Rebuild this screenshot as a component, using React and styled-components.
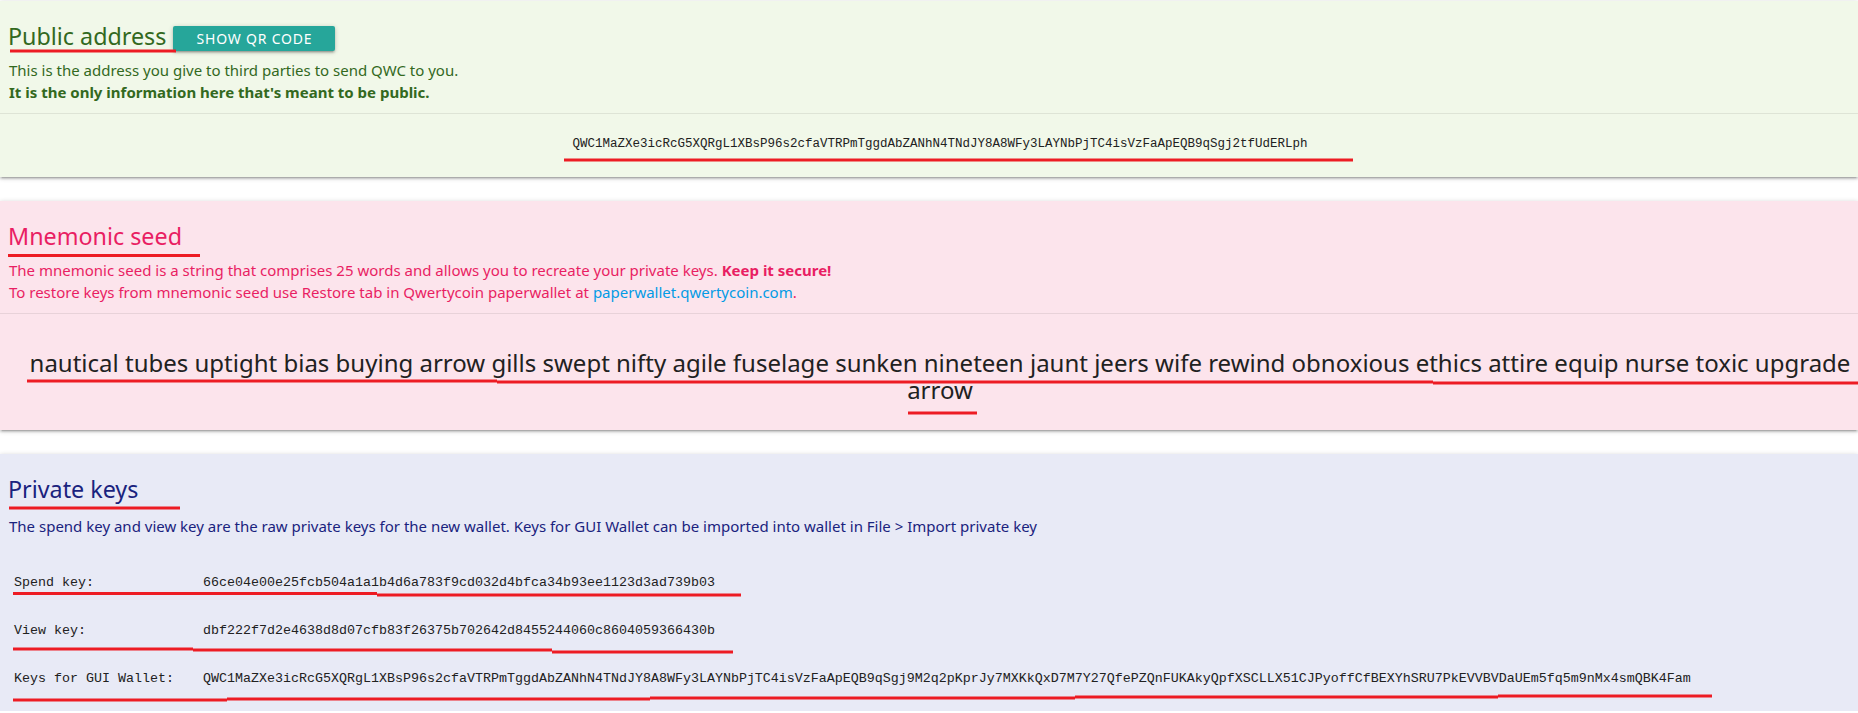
import styled, { createGlobalStyle } from "styled-components";

const COLORS = {
  GREEN_BG: "#f1f8e9",
  GREEN_TEXT: "#33691e",
  PINK_BG: "#fce4ec",
  PINK_TEXT: "#e91e63",
  INDIGO_BG: "#e8eaf6",
  INDIGO_TEXT: "#1a237e",
  TEAL: "#26a69a",
  LINK: "#039be5",
  DARK: "#212121",
  MARK: "#ed1c24",
};

const ADDRESS =
  "QWC1MaZXe3icRcG5XQRgL1XBsP96s2cfaVTRPmTggdAbZANhN4TNdJY8A8WFy3LAYNbPjTC4isVzFaApEQB9qSgj2tfUdERLph";

const MNEMONIC =
  "nautical tubes uptight bias buying arrow gills swept nifty agile fuselage sunken nineteen jaunt jeers wife rewind obnoxious ethics attire equip nurse toxic upgrade arrow";

const KEYS = [
  { label: "Spend key:", value: "66ce04e00e25fcb504a1a1b4d6a783f9cd032d4bfca34b93ee1123d3ad739b03" },
  { label: "View key:", value: "dbf222f7d2e4638d8d07cfb83f26375b702642d8455244060c8604059366430b" },
  {
    label: "Keys for GUI Wallet:",
    value:
      "QWC1MaZXe3icRcG5XQRgL1XBsP96s2cfaVTRPmTggdAbZANhN4TNdJY8A8WFy3LAYNbPjTC4isVzFaApEQB9qSgj9M2q2pKprJy7MXKkQxD7M7Y27QfePZQnFUKAkyQpfXSCLLX51CJPyoffCfBEXYhSRU7PkEVVBVDaUEm5fq5m9nMx4smQBK4Fam",
  },
];

// red hand-drawn annotation strokes lying over the page
const MARKS = [
  [10, 51, 176, 51],
  [564, 160, 1353, 160],
  [8, 255.5, 200, 255.5],
  [27, 381, 497, 381],
  [497, 382, 1433, 382],
  [1433, 383, 1858, 383],
  [908, 413, 977, 413],
  [9, 508, 180, 508],
  [13, 593.5, 377, 593.5],
  [377, 595, 741, 595],
  [13, 649, 193, 649],
  [193, 650, 552, 650],
  [552, 652, 733, 652],
  [13, 700, 227, 700],
  [227, 699, 650, 699],
  [650, 698, 1075, 698],
  [1075, 697, 1498, 697],
  [1498, 696, 1712, 696],
];

const GlobalStyle = createGlobalStyle`
  html, body {
    margin: 0;
    padding: 0;
    background: #fff;
  }
  body {
    font-family: "Noto Sans", "Noto Sans CJK KR", sans-serif;
    font-size: 15px;
  }
`;

const Page = styled.div`
  position: relative;
  width: 1858px;
  padding-top: 1px;
  display: flex;
  flex-direction: column;
  gap: 24px;
`;

const Panel = styled.section`
  background: ${(p) => p.$bg};
  color: ${(p) => p.$fg};
  padding-top: 20px;
  box-shadow: 0 2px 2px 0 rgba(0, 0, 0, 0.14), 0 3px 1px -2px rgba(0, 0, 0, 0.12),
    0 1px 5px 0 rgba(0, 0, 0, 0.2);
`;

const Header = styled.div`
  display: flex;
  align-items: flex-end;
  padding-left: 8px;
`;

const Title = styled.h2`
  margin: 0;
  font-size: 23.3px;
  line-height: 30px;
  font-weight: 400;
`;

const QrButton = styled.button`
  display: inline-flex;
  align-items: center;
  justify-content: center;
  width: 162px;
  height: 25px;
  margin-left: 7px;
  padding: 0;
  border: none;
  border-radius: 2px;
  background: ${COLORS.TEAL};
  color: #fff;
  font-family: "Noto Sans", sans-serif;
  font-size: 14px;
  letter-spacing: 0.8px;
  text-transform: uppercase;
  box-shadow: 0 2px 2px 0 rgba(0, 0, 0, 0.14), 0 3px 1px -2px rgba(0, 0, 0, 0.12),
    0 1px 5px 0 rgba(0, 0, 0, 0.2);
  cursor: pointer;
`;

const Desc = styled.div`
  margin-top: ${(p) => p.$top || 8}px;
  padding: 0 9px;
  font-size: 15px;
  line-height: 22px;
`;

const Divider = styled.hr`
  margin: 10px 0 0;
  border: none;
  border-top: 1px solid rgba(0, 0, 0, 0.08);
`;

const Address = styled.div`
  padding: 20px 0 23px 22px;
  text-align: center;
  font-family: "Liberation Mono", "DejaVu Sans Mono", monospace;
  font-size: 12.5px;
  line-height: 20px;
  color: ${COLORS.DARK};
`;

const Mnemonic = styled.div`
  padding: 35px 0 27px 22px;
  text-align: center;
  font-size: 24px;
  line-height: 27px;
  color: ${COLORS.DARK};
`;

const Link = styled.a`
  color: ${COLORS.LINK};
  text-decoration: none;
`;

const KeyGrid = styled.div`
  display: grid;
  grid-template-columns: 189px auto;
  grid-auto-rows: 48px;
  align-items: center;
  margin-top: 21px;
  padding: 0 0 9px 14px;
  font-family: "Liberation Mono", "DejaVu Sans Mono", monospace;
  font-size: 13.33px;
  color: ${COLORS.DARK};
`;

const KeyCell = styled.div`
  white-space: nowrap;
`;

const Overlay = styled.svg`
  position: absolute;
  left: 0;
  top: 0;
  pointer-events: none;
`;

const KeyRow = ({ label, value }) => (
  <>
    <KeyCell>{label}</KeyCell>
    <KeyCell>{value}</KeyCell>
  </>
);

const App = () => (
  <>
    <GlobalStyle />
    <Page>
      <Panel $bg={COLORS.GREEN_BG} $fg={COLORS.GREEN_TEXT}>
        <Header>
          <Title>Public address</Title>
          <QrButton>Show QR code</QrButton>
        </Header>
        <Desc>
          This is the address you give to third parties to send QWC to you.
          <br />
          <b>It is the only information here that's meant to be public.</b>
        </Desc>
        <Divider />
        <Address>{ADDRESS}</Address>
      </Panel>

      <Panel $bg={COLORS.PINK_BG} $fg={COLORS.PINK_TEXT}>
        <Header>
          <Title>Mnemonic seed</Title>
        </Header>
        <Desc>
          The mnemonic seed is a string that comprises 25 words and allows you to recreate your
          private keys. <b>Keep it secure!</b>
          <br />
          To restore keys from mnemonic seed use Restore tab in Qwertycoin paperwallet at{" "}
          <Link href="#">paperwallet.qwertycoin.com</Link>.
        </Desc>
        <Divider />
        <Mnemonic>{MNEMONIC}</Mnemonic>
      </Panel>

      <Panel $bg={COLORS.INDIGO_BG} $fg={COLORS.INDIGO_TEXT}>
        <Header>
          <Title>Private keys</Title>
        </Header>
        <Desc $top={11}>
          The spend key and view key are the raw private keys for the new wallet. Keys for GUI
          Wallet can be imported into wallet in File &gt; Import private key
        </Desc>
        <KeyGrid>
          {KEYS.map((k) => (
            <KeyRow key={k.label} label={k.label} value={k.value} />
          ))}
        </KeyGrid>
      </Panel>

      <Overlay width="1858" height="713" viewBox="0 0 1858 713">
        {MARKS.map(([x1, y1, x2, y2], i) => (
          <line key={i} x1={x1} y1={y1} x2={x2} y2={y2} stroke={COLORS.MARK} strokeWidth="3" />
        ))}
      </Overlay>
    </Page>
  </>
);

export default App;
